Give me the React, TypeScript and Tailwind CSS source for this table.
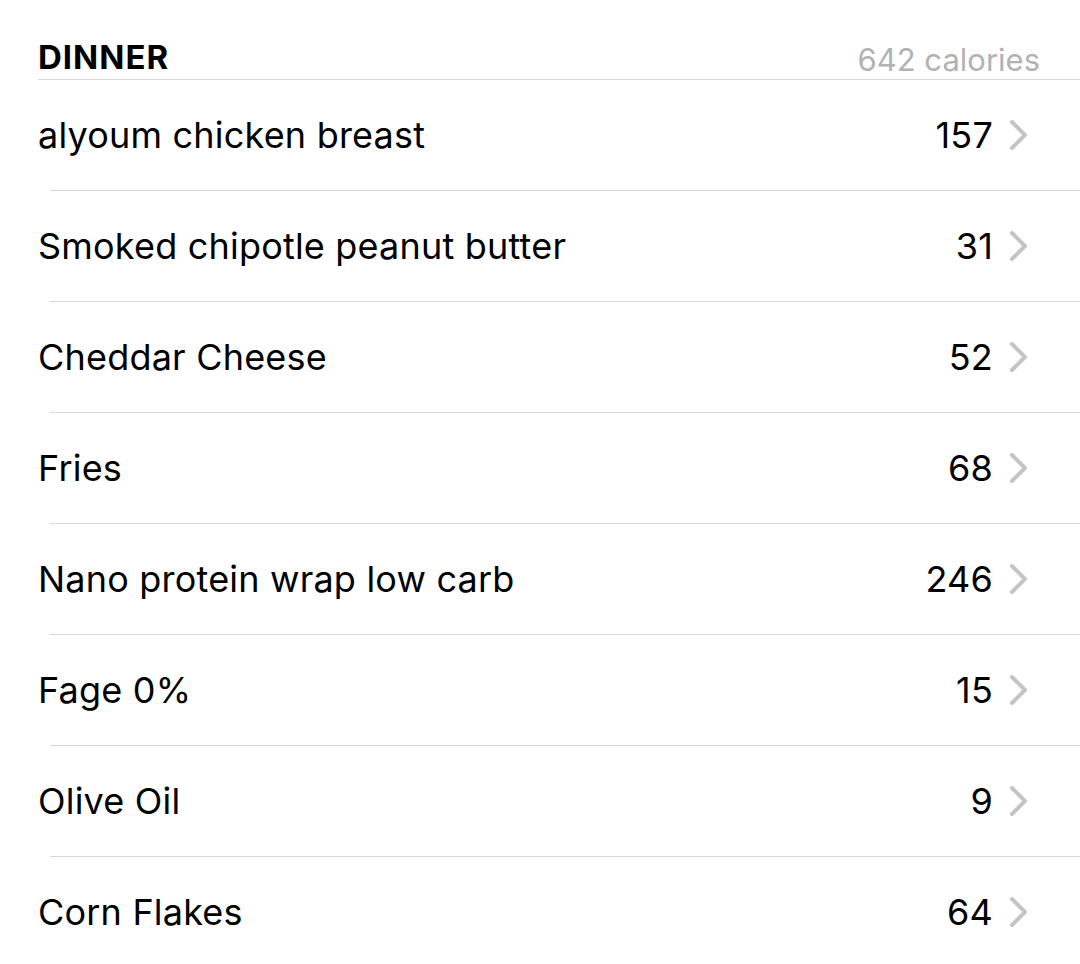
const items: { name: string; cal: number }[] = [
  { name: "alyoum chicken breast", cal: 157 },
  { name: "Smoked chipotle peanut butter", cal: 31 },
  { name: "Cheddar Cheese", cal: 52 },
  { name: "Fries", cal: 68 },
  { name: "Nano protein wrap low carb", cal: 246 },
  { name: "Fage 0%", cal: 15 },
  { name: "Olive Oil", cal: 9 },
  { name: "Corn Flakes", cal: 64 },
];

const Chevron = () => (
  <svg width="20" height="32" viewBox="0 0 20 32" fill="none">
    <polyline
      points="3,3 16,16 3,29"
      stroke="#c4c4c6"
      strokeWidth="4"
      strokeLinecap="round"
      strokeLinejoin="round"
    />
  </svg>
);

export default function App() {
  return (
    <div className="w-[1080px] h-[964px] overflow-hidden bg-white font-['Inter',sans-serif] text-black">
      {/* Header */}
      <div className="ml-[38px] h-[80px] flex items-end justify-between pr-[40px] pb-[5px] border-b border-[#d6d6d8]">
        <span className="text-[33px] font-bold tracking-[1px] leading-none">DINNER</span>
        <span className="text-[31px] text-[#b2b2b4] leading-none translate-y-[1px]">642 calories</span>
      </div>

      {/* Rows */}
      {items.map((item, i) => (
        <div key={i} className="flex flex-col">
          <div className="h-[110px] flex items-center justify-between pl-[38px] pr-[51px]">
            <span className="text-[36px] tracking-[0.2px]">{item.name}</span>
            <div className="flex items-center gap-[16px]">
              <span className="text-[36px] tracking-[0.2px]">{item.cal}</span>
              <Chevron />
            </div>
          </div>
          {i < items.length - 1 && <div className="ml-[50px] h-px bg-[#d6d6d8]" />}
        </div>
      ))}
    </div>
  );
}
